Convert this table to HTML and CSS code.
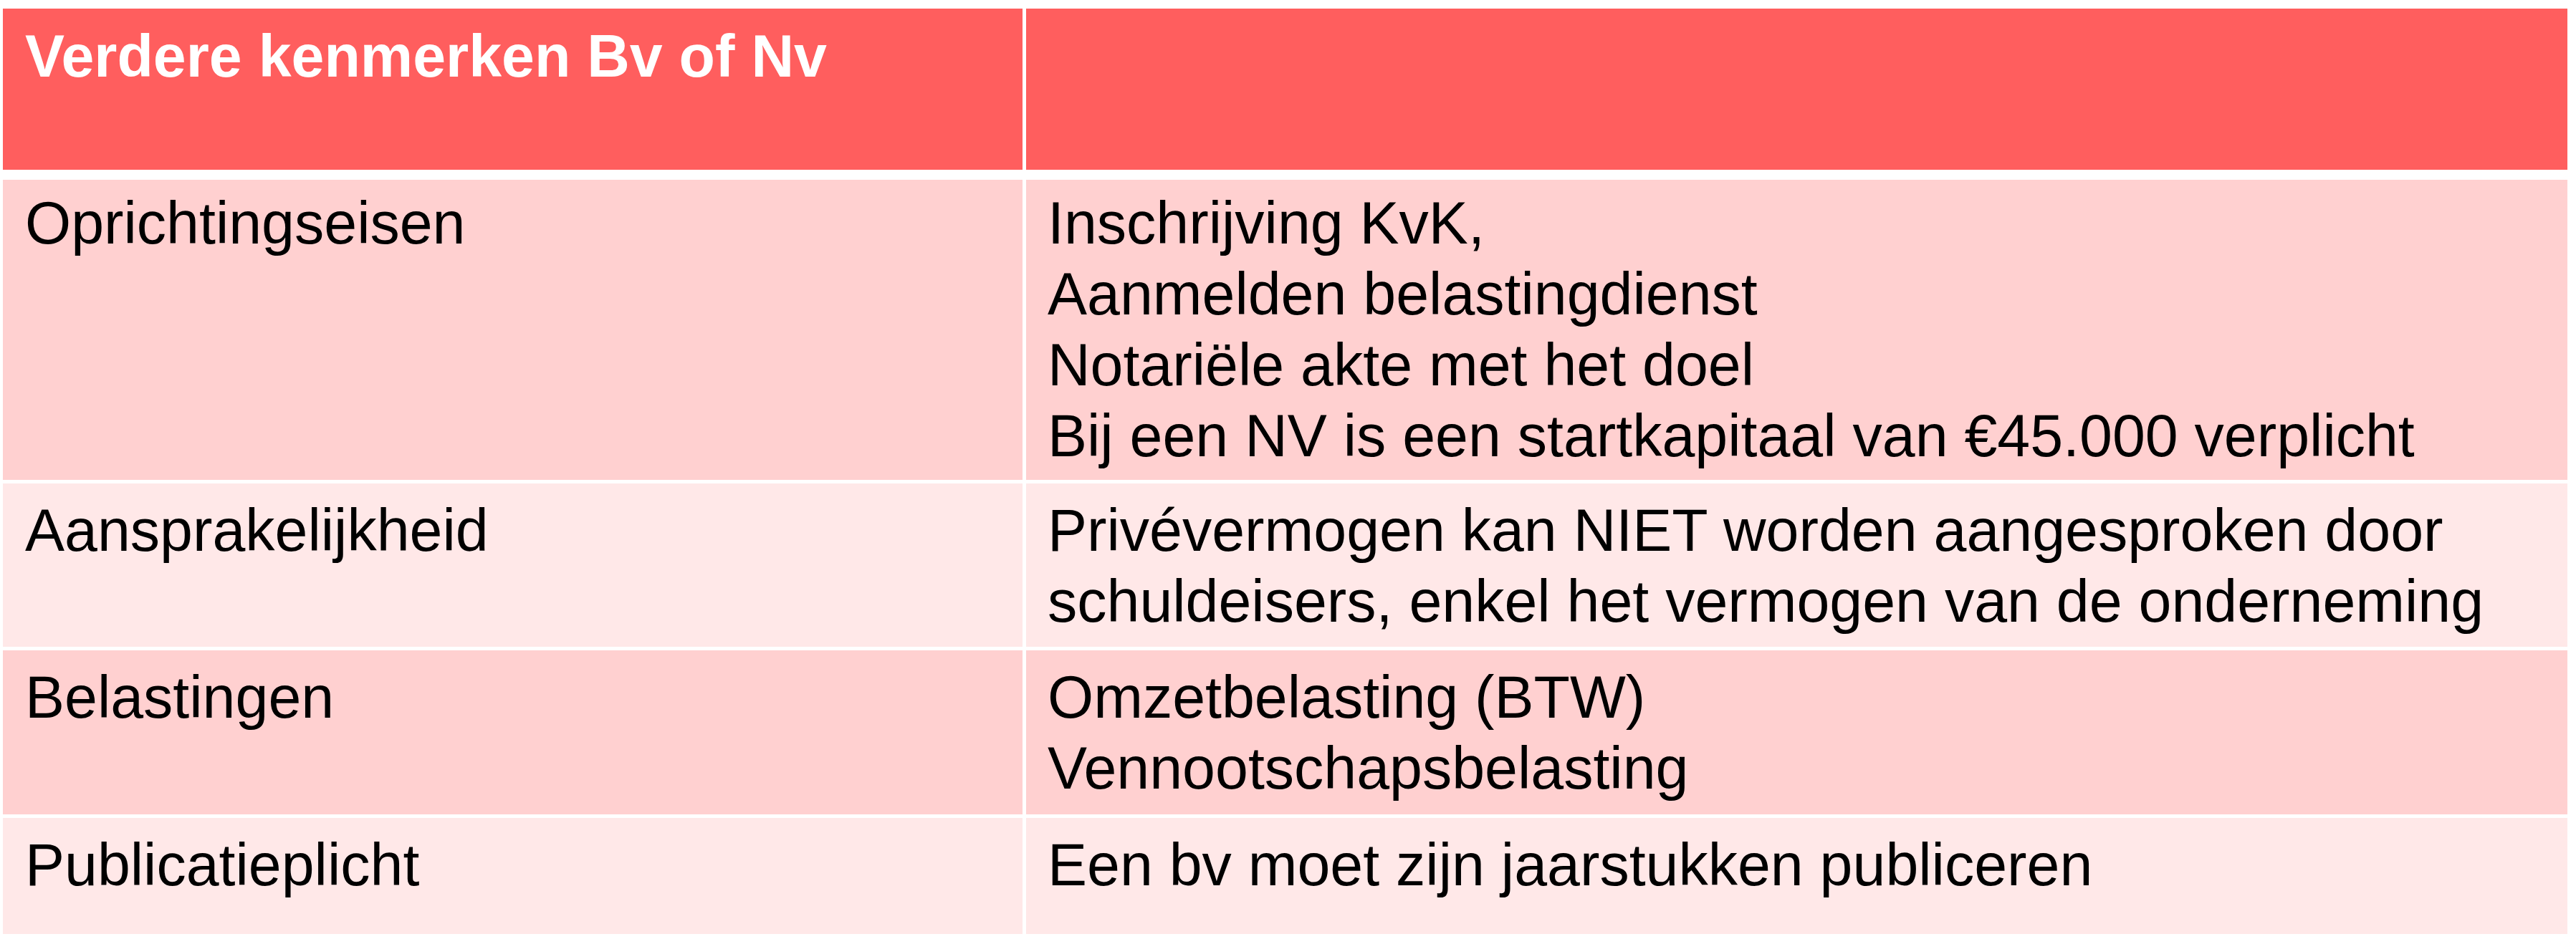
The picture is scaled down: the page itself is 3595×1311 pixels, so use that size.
FILE: index.html
```html
<!DOCTYPE html>
<html lang="nl">
<head>
<meta charset="utf-8">
<title>Verdere kenmerken Bv of Nv</title>
<link rel="stylesheet" href="styles.css">
</head>
<body>
<div class="table">
  <div class="row head">
    <div class="cell">Verdere kenmerken Bv of Nv</div>
    <div class="cell"></div>
  </div>
  <div class="row dark r1">
    <div class="cell">Oprichtingseisen</div>
    <div class="cell">Inschrijving KvK,<br>Aanmelden belastingdienst<br>Notariële akte met het doel<br>Bij een NV is een startkapitaal van €45.000 verplicht</div>
  </div>
  <div class="row light r2">
    <div class="cell">Aansprakelijkheid</div>
    <div class="cell">Privévermogen kan NIET worden aangesproken door<br>schuldeisers, enkel het vermogen van de onderneming</div>
  </div>
  <div class="row dark r3">
    <div class="cell">Belastingen</div>
    <div class="cell">Omzetbelasting (BTW)<br>Vennootschapsbelasting</div>
  </div>
  <div class="row light r4">
    <div class="cell">Publicatieplicht</div>
    <div class="cell">Een bv moet zijn jaarstukken publiceren</div>
  </div>
</div>
</body>
</html>
```

FILE: styles.css
```css
html, body {
  margin: 0;
  padding: 0;
  background: #ffffff;
}

body {
  font-family: "Liberation Sans", Arial, sans-serif;
  color: #000000;
}

.table {
  display: flex;
  flex-direction: column;
  gap: 5px;
  margin: 12px 0 0 4px;
  width: 3579px;
}

.row {
  display: grid;
  grid-template-columns: 1423px 2151px;
  column-gap: 5px;
}

.cell {
  box-sizing: border-box;
  padding: 16px 20px 0 31px;
  font-size: 82.5px;
  line-height: 99px;
  white-space: nowrap;
}

.row .cell + .cell {
  padding-left: 30px;
}

.head {
  height: 225px;
  margin-bottom: 9px;
}

.head .cell {
  background: #ff5e5e;
  color: #ffffff;
  font-weight: bold;
  padding-top: 17px;
}

.dark .cell {
  background: #ffd0d0;
}

.light .cell {
  background: #ffe8e8;
}

.r1 { height: 419px; }
.r1 .cell { padding-top: 11px; }
.r2 { height: 228px; }
.r3 { height: 229px; }
.r4 { height: 162px; }
```
